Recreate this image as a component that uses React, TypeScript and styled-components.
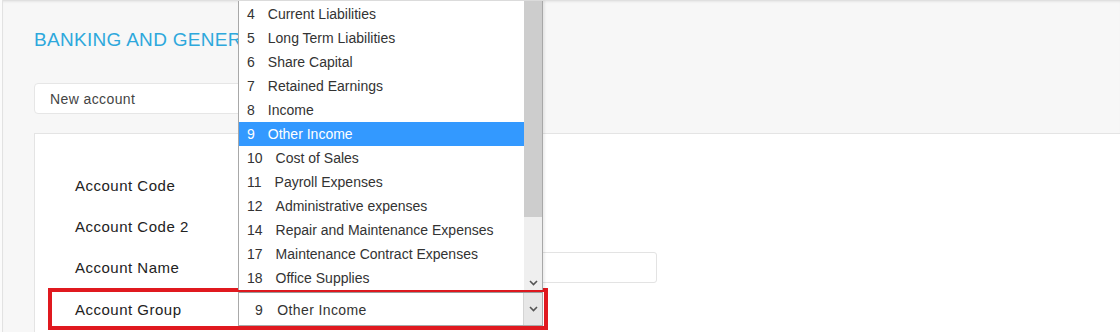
import styled, { createGlobalStyle } from 'styled-components';

const GlobalStyle = createGlobalStyle`
  html, body {
    margin: 0;
    padding: 0;
    background: #fbfbfb;
  }
  body {
    font-family: "Liberation Sans", Arial, sans-serif;
    color: #333;
    overflow: hidden;
  }
`;

const Shell = styled.div`
  margin-left: 2px;
  border-left: 1px solid #e2e2e2;
  background: #f7f7f7;
  height: 332px;
  box-sizing: border-box;
  padding: 29px 0 0 31px;
  box-shadow: inset 0 3px 3px -2px rgba(0, 0, 0, 0.14);
  overflow: hidden;
`;

// the open list covers the rest of the heading, so it is clipped where the list starts
const Title = styled.h1`
  margin: 0;
  width: 204px;
  overflow: hidden;
  font-size: 19px;
  line-height: 22px;
  letter-spacing: 0.3px;
  font-weight: normal;
  color: #2ea8dc;
  white-space: nowrap;
`;

const TabBox = styled.div`
  margin-top: 32px;
  width: 420px;
  height: 31px;
  box-sizing: border-box;
  border: 1px solid #e6e6e6;
  border-radius: 4px;
  background: #fff;
  padding-left: 15px;
  display: flex;
  align-items: center;
  font-size: 14px;
  letter-spacing: 0.4px;
  color: #444;
`;

const Card = styled.div`
  margin-top: 19px;
  min-height: 200px;
  background: #fff;
  border-top: 1px solid #e4e4e4;
  border-left: 1px solid #e4e4e4;
  padding: 31px 0 0 13px;
`;

const FormRow = styled.div<{ $highlight?: boolean }>`
  position: relative;
  display: grid;
  grid-template-columns: 163px auto;
  align-items: center;
  height: ${p => (p.$highlight ? '42px' : '41px')};
  box-sizing: border-box;
  padding-left: ${p => (p.$highlight ? '23px' : '27px')};
  width: ${p => (p.$highlight ? '500px' : 'auto')};
  border: ${p => (p.$highlight ? '4px solid #e0191f' : 'none')};
`;

const Label = styled.span`
  font-size: 15px;
  letter-spacing: 0.5px;
  color: #222;
`;

const TextBox = styled.div<{ $width: number }>`
  width: ${p => p.$width}px;
  height: 31px;
  box-sizing: border-box;
  border: 1px solid #e3e3e3;
  border-radius: 3px;
  background: #fff;
`;

const SelectBox = styled.div`
  width: 305px;
  height: 34px;
  box-sizing: border-box;
  border: 1px solid #a9a9a9;
  border-top-color: #9a9a9a;
  background: #fff;
  display: flex;
`;

const SelectText = styled.div`
  flex: 1;
  display: flex;
  align-items: center;
  padding: 2px 0 0 16px;
  font-size: 14px;
  letter-spacing: 0.4px;
  color: #333;
`;

const SelectNum = styled.span`
  margin-right: 14px;
`;

const ArrowButton = styled.div`
  width: 18px;
  background: #e7e7e7;
  border-left: 1px solid #d4d4d4;
  display: flex;
  align-items: center;
  justify-content: center;
`;

const OptionList = styled.div`
  position: absolute;
  left: 186px;
  bottom: calc(100% + 2px);
  width: 305px;
  box-sizing: border-box;
  border-left: 1px solid #a8a8a8;
  border-right: 1px solid #a8a8a8;
  background: #fff;
  display: flex;
  box-shadow: 2px 0 2px rgba(0, 0, 0, 0.07);
  z-index: 2;
`;

const Options = styled.div`
  flex: 1;
  padding-top: 1px;
`;

const Option = styled.div<{ $selected?: boolean }>`
  height: 24px;
  display: flex;
  align-items: center;
  padding-left: 8px;
  font-size: 14px;
  background: ${p => (p.$selected ? '#3399ff' : 'transparent')};
  color: ${p => (p.$selected ? '#fff' : '#333')};
  white-space: nowrap;
`;

const OptionNum = styled.span`
  margin-right: 13px;
`;

const ScrollTrack = styled.div`
  width: 18px;
  background: #efefef;
  display: flex;
  flex-direction: column;
`;

const ScrollThumb = styled.div`
  height: 216px;
  background: #cdcdcd;
`;

const ScrollSpacer = styled.div`
  flex: 1;
`;

const ScrollArrow = styled.div`
  height: 14px;
  display: flex;
  align-items: center;
  justify-content: center;
`;

const Chevron = () => (
  <svg width="9" height="6" viewBox="0 0 9 6">
    <polyline points="1,1 4.5,4.5 8,1" fill="none" stroke="#555" strokeWidth="1.6" />
  </svg>
);

const groups = [
  { num: '4', name: 'Current Liabilities' },
  { num: '5', name: 'Long Term Liabilities' },
  { num: '6', name: 'Share Capital' },
  { num: '7', name: 'Retained Earnings' },
  { num: '8', name: 'Income' },
  { num: '9', name: 'Other Income' },
  { num: '10', name: 'Cost of Sales' },
  { num: '11', name: 'Payroll Expenses' },
  { num: '12', name: 'Administrative expenses' },
  { num: '14', name: 'Repair and Maintenance Expenses' },
  { num: '17', name: 'Maintenance Contract Expenses' },
  { num: '18', name: 'Office Supplies' },
];

export default function App() {
  const selected = '9';
  const current = groups.find(g => g.num === selected)!;

  return (
    <>
      <GlobalStyle />
      <Shell>
        <Title>BANKING AND GENERAL LEDGER</Title>
        <TabBox>New account</TabBox>
        <Card>
          <FormRow>
            <Label>Account Code</Label>
            <TextBox $width={260} />
          </FormRow>
          <FormRow>
            <Label>Account Code 2</Label>
            <TextBox $width={260} />
          </FormRow>
          <FormRow>
            <Label>Account Name</Label>
            <TextBox $width={419} />
          </FormRow>
          <FormRow $highlight>
            <Label>Account Group</Label>
            <SelectBox>
              <SelectText>
                <SelectNum>{current.num}</SelectNum>
                {current.name}
              </SelectText>
              <ArrowButton>
                <Chevron />
              </ArrowButton>
            </SelectBox>
            <OptionList>
              <Options>
                {groups.map(g => (
                  <Option key={g.num} $selected={g.num === selected}>
                    <OptionNum>{g.num}</OptionNum>
                    {g.name}
                  </Option>
                ))}
              </Options>
              <ScrollTrack>
                <ScrollThumb />
                <ScrollSpacer />
                <ScrollArrow>
                  <Chevron />
                </ScrollArrow>
              </ScrollTrack>
            </OptionList>
          </FormRow>
        </Card>
      </Shell>
    </>
  );
}
